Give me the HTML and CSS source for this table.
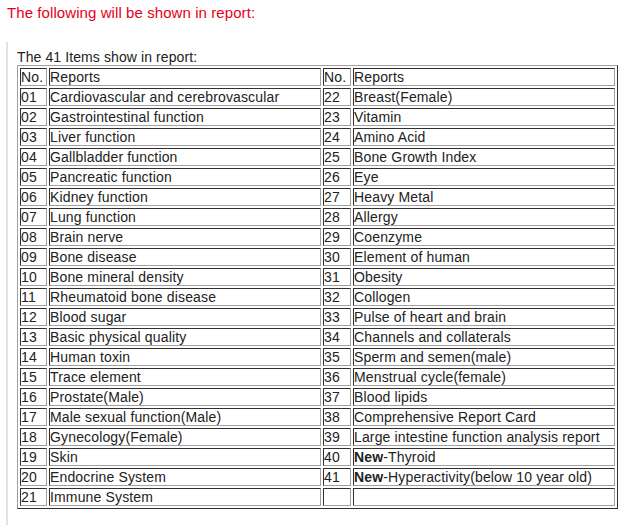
FILE: index.html
```html
<!DOCTYPE html>
<html>
<head>
<meta charset="utf-8">
<link rel="stylesheet" href="styles.css">
</head>
<body>
<div class="title">The following will be shown in report:</div>
<div class="panel">
  <div class="caption">The 41 Items show in report:</div>
  <table class="reports">
    <colgroup>
      <col class="c-no"><col class="c-name"><col class="c-no2"><col class="c-name2">
    </colgroup>
    <tr><td>No.</td><td>Reports</td><td>No.</td><td>Reports</td></tr>
    <tr><td>01</td><td>Cardiovascular and cerebrovascular</td><td>22</td><td>Breast(Female)</td></tr>
    <tr><td>02</td><td>Gastrointestinal function</td><td>23</td><td>Vitamin</td></tr>
    <tr><td>03</td><td>Liver function</td><td>24</td><td>Amino Acid</td></tr>
    <tr><td>04</td><td>Gallbladder function</td><td>25</td><td>Bone Growth Index</td></tr>
    <tr><td>05</td><td>Pancreatic function</td><td>26</td><td>Eye</td></tr>
    <tr><td>06</td><td>Kidney function</td><td>27</td><td>Heavy Metal</td></tr>
    <tr><td>07</td><td>Lung function</td><td>28</td><td>Allergy</td></tr>
    <tr><td>08</td><td>Brain nerve</td><td>29</td><td>Coenzyme</td></tr>
    <tr><td>09</td><td>Bone disease</td><td>30</td><td>Element of human</td></tr>
    <tr><td>10</td><td>Bone mineral density</td><td>31</td><td>Obesity</td></tr>
    <tr><td>11</td><td>Rheumatoid bone disease</td><td>32</td><td>Collogen</td></tr>
    <tr><td>12</td><td>Blood sugar</td><td>33</td><td>Pulse of heart and brain</td></tr>
    <tr><td>13</td><td>Basic physical quality</td><td>34</td><td>Channels and collaterals</td></tr>
    <tr><td>14</td><td>Human toxin</td><td>35</td><td>Sperm and semen(male)</td></tr>
    <tr><td>15</td><td>Trace element</td><td>36</td><td>Menstrual cycle(female)</td></tr>
    <tr><td>16</td><td>Prostate(Male)</td><td>37</td><td>Blood lipids</td></tr>
    <tr><td>17</td><td>Male sexual function(Male)</td><td>38</td><td>Comprehensive Report Card</td></tr>
    <tr><td>18</td><td>Gynecology(Female)</td><td>39</td><td>Large intestine function analysis report</td></tr>
    <tr><td>19</td><td>Skin</td><td>40</td><td><b>New</b>-Thyroid</td></tr>
    <tr><td>20</td><td>Endocrine System</td><td>41</td><td><b>New</b>-Hyperactivity(below 10 year old)</td></tr>
    <tr><td>21</td><td>Immune System</td><td></td><td></td></tr>
  </table>
</div>
</body>
</html>
```
FILE: styles.css
```css
html, body {
  margin: 0;
  padding: 0;
  background: #fff;
}
body {
  font-family: "Liberation Sans", Arial, sans-serif;
  color: #222;
  height: 525px;
  overflow: hidden;
}
.title {
  padding: 4px 0 0 7px;
  font-size: 15px;
  line-height: 17px;
  letter-spacing: 0.08px;
  color: #e5001a;
}
.panel {
  margin: 21px 0 0 6px;
  border-left: 2px solid #e2e2e2;
  padding: 8px 0 0 9px;
  min-height: 500px;
}
.caption {
  font-size: 14px;
  line-height: 15px;
  letter-spacing: 0.1px;
  color: #222;
}
.reports {
  width: 601px;
  table-layout: fixed;
  border-collapse: separate;
  border-spacing: 2px;
  border: 1px solid;
  border-color: #a0a0a0 #303030 #303030 #a0a0a0;
  font-size: 14px;
  line-height: 16px;
  letter-spacing: 0.15px;
}
.reports td {
  border: 1px solid;
  border-color: #303030 #a0a0a0 #a0a0a0 #303030;
  padding: 0;
  height: 16px;
  white-space: nowrap;
  overflow: hidden;
}
.c-no { width: 27px; }
.c-name { width: 272px; }
.c-no2 { width: 28px; }
.c-name2 { width: 262px; }
```
